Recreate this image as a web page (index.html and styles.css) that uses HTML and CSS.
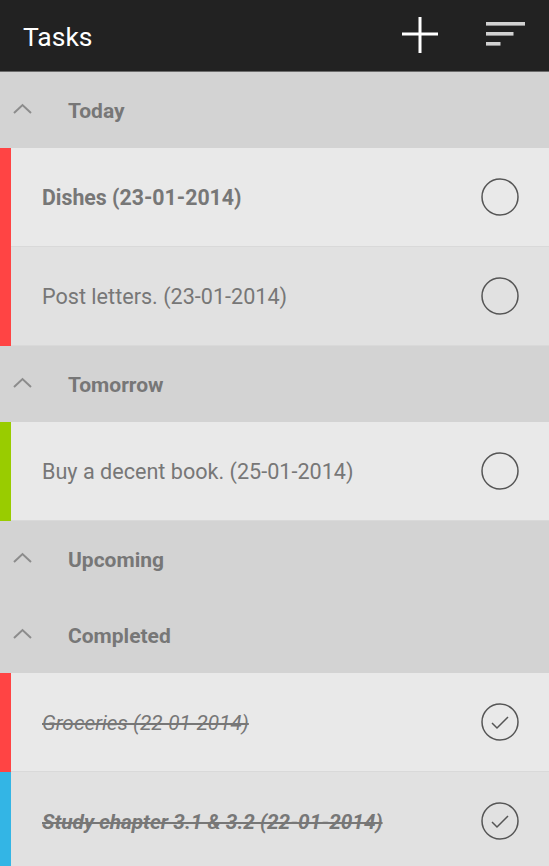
FILE: index.html
```html
<!DOCTYPE html>
<html>
<head>
<meta charset="utf-8">
<link rel="stylesheet" href="styles.css">
</head>
<body>
<div class="app">
  <header class="bar">
    <div class="title">Tasks</div>
    <div class="actions">
      <svg class="icon-add" width="38" height="38" viewBox="0 0 38 38"><path d="M19 1V37M1 18H37" stroke="#fff" stroke-width="3" fill="none"/></svg>
      <svg class="icon-sort" width="40" height="26" viewBox="0 0 40 26"><rect x="0" y="0" width="39" height="3.6" fill="#d2d2d2"/><rect x="0" y="10" width="27.5" height="3.6" fill="#d2d2d2"/><rect x="0" y="20" width="14.5" height="3.6" fill="#d2d2d2"/></svg>
    </div>
  </header>

  <section class="group">
    <div class="group-head"><svg class="chev" width="20" height="12" viewBox="0 0 20 12"><path d="M1 10L9.5 2L18 10" stroke="#8c8c8c" stroke-width="2" fill="none"/></svg><span>Today</span></div>
    <div class="task light"><span class="tag red"></span><span class="label bold">Dishes (23-01-2014)</span><svg class="check" width="40" height="40" viewBox="0 0 40 40"><circle cx="20" cy="20" r="18" stroke="#555" stroke-width="1.5" fill="none"/></svg></div>
    <div class="task dark"><span class="tag red"></span><span class="label">Post letters. (23-01-2014)</span><svg class="check" width="40" height="40" viewBox="0 0 40 40"><circle cx="20" cy="20" r="18" stroke="#555" stroke-width="1.5" fill="none"/></svg></div>
  </section>

  <section class="group">
    <div class="group-head"><svg class="chev" width="20" height="12" viewBox="0 0 20 12"><path d="M1 10L9.5 2L18 10" stroke="#8c8c8c" stroke-width="2" fill="none"/></svg><span>Tomorrow</span></div>
    <div class="task light"><span class="tag green"></span><span class="label">Buy a decent book. (25-01-2014)</span><svg class="check" width="40" height="40" viewBox="0 0 40 40"><circle cx="20" cy="20" r="18" stroke="#555" stroke-width="1.5" fill="none"/></svg></div>
  </section>

  <section class="group">
    <div class="group-head"><svg class="chev" width="20" height="12" viewBox="0 0 20 12"><path d="M1 10L9.5 2L18 10" stroke="#8c8c8c" stroke-width="2" fill="none"/></svg><span>Upcoming</span></div>
  </section>

  <section class="group">
    <div class="group-head"><svg class="chev" width="20" height="12" viewBox="0 0 20 12"><path d="M1 10L9.5 2L18 10" stroke="#8c8c8c" stroke-width="2" fill="none"/></svg><span>Completed</span></div>
    <div class="task light"><span class="tag red"></span><span class="label done">Groceries (22-01-2014)</span><svg class="check" width="40" height="40" viewBox="0 0 40 40"><circle cx="20" cy="20" r="18" stroke="#555" stroke-width="1.5" fill="none"/><path d="M12 21L17 26L28 15" stroke="#555" stroke-width="1.5" fill="none"/></svg></div>
    <div class="task dark"><span class="tag blue"></span><span class="label done bold">Study chapter 3.1 &amp; 3.2 (22-01-2014)</span><svg class="check" width="40" height="40" viewBox="0 0 40 40"><circle cx="20" cy="20" r="18" stroke="#555" stroke-width="1.5" fill="none"/><path d="M12 21L17 26L28 15" stroke="#555" stroke-width="1.5" fill="none"/></svg></div>
  </section>
</div>
</body>
</html>
```

FILE: styles.css
```css
* { box-sizing: border-box; }
html, body { margin: 0; padding: 0; }
body {
  width: 549px;
  height: 866px;
  overflow: hidden;
  background: #d3d3d3;
  font-family: Roboto, "Liberation Sans", sans-serif;
}
.app { display: flex; flex-direction: column; }
.bar {
  height: 72px;
  background: #222222;
  border-bottom: 1px solid #6b6b6b;
  display: flex;
  align-items: center;
  justify-content: space-between;
  padding: 0 23px 0 23px;
}
.title {
  color: #fff;
  font-size: 26.5px;
  margin-top: 2px;
}
.actions {
  display: flex;
  align-items: center;
  gap: 47px;
  margin-top: -2px;
}
.icon-add { display: block; margin-top: 1px; }
.icon-sort { display: block; margin-top: 1px; }

.group-head {
  height: 76px;
  background: #d3d3d3;
  display: flex;
  align-items: center;
  padding-left: 13px;
  color: #777;
  font-weight: bold;
  font-size: 21px;
}
.group-head span { margin-top: 1px; }
.chev { display: block; margin-top: -2px; margin-right: 35px; }

.task {
  height: 99px;
  display: flex;
  align-items: center;
  border-bottom: 1px solid #d9d9d9;
  color: #777;
  font-size: 21.6px;
}
.task.light { background: #e9e9e9; }
.task.dark { background: #e1e1e1; }
.tag { align-self: stretch; width: 11px; flex: none; margin-bottom: -1px; }
.tag.red { background: #ff4444; }
.tag.green { background: #99cc00; }
.tag.blue { background: #33b5e5; }
.label { flex: 1; padding-left: 31px; margin-top: 1px; }
.label.bold { font-weight: bold; font-size: 21.3px; }
.label.done { font-style: italic; text-decoration: line-through; font-size: 20.8px; }
.label.done.bold { font-size: 20.8px; }
.check { display: block; margin-right: 29px; flex: none; }
```
